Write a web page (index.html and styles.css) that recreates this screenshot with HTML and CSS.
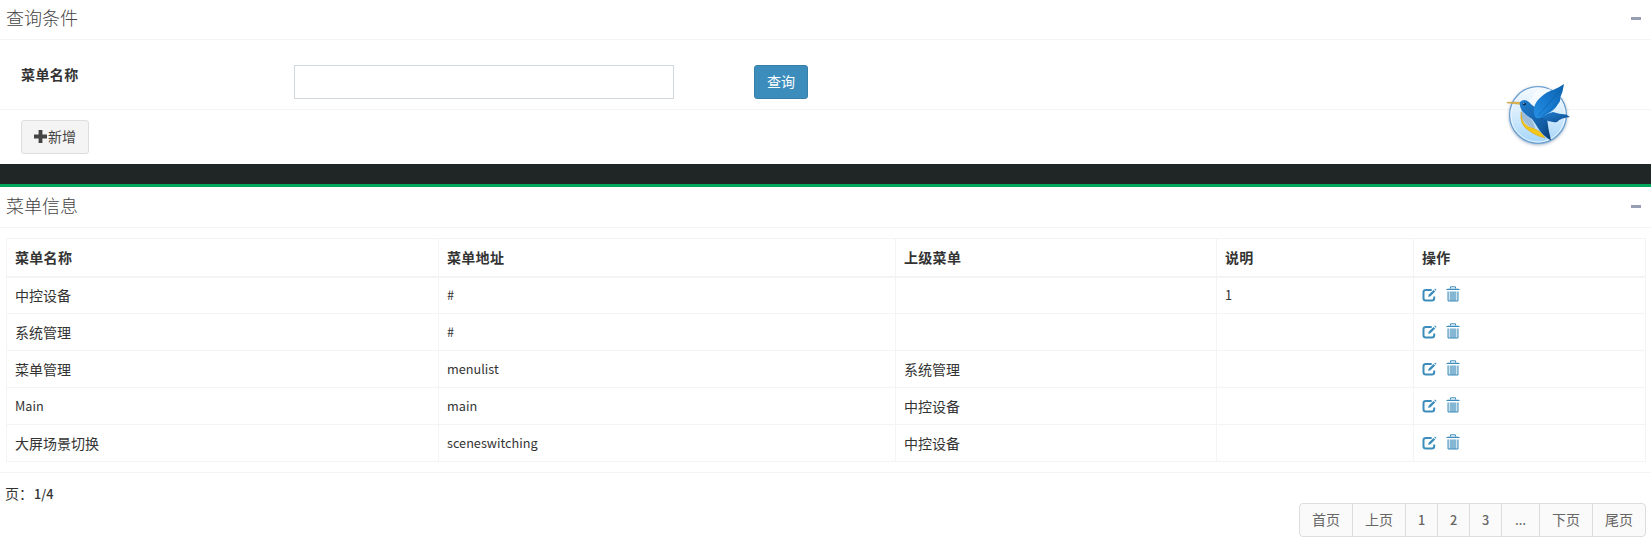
FILE: index.html
```html
<!DOCTYPE html>
<html lang="zh-CN">
<head>
<meta charset="utf-8">
<title>菜单管理</title>
<link rel="stylesheet" href="styles.css">
</head>
<body>
<svg class="defs" width="0" height="0">
  <symbol id="edit" viewBox="0 0 14 14">
    <path d="M9.2 1.9H3.4Q1 1.9 1 4.2V10.2Q1 12.5 3.4 12.5H9.4Q11.7 12.5 11.7 10.2V8.6" fill="none" stroke="currentColor" stroke-width="2"/>
    <path d="M5.6 9 6.3 6.6 11 1.9 12.7 3.600 8 8.300ZM11.700 1.200 12.500.4 14.100 2 13.300 2.800Z" fill="currentColor"/>
  </symbol>
  <symbol id="trash" viewBox="0 0 14 16">
    <path d="M4.500 2.500V.8H9.500V2.500M.5 3.500H13.500M2 5.500V15H12V5.500M5 5.500V15M7 5.500V15M9 5.500V15" fill="none" stroke="currentColor" stroke-width="1"/>
    <path d="M1.500 2.500H12.500V4H1.500Z" fill="currentColor" opacity=".65"/>
    <path d="M2 5.500H12V15H2Z" fill="currentColor" opacity=".25"/>
  </symbol>
</svg>
<section class="box">
  <header class="box-header"><h3 class="box-title">查询条件</h3><span class="collapse"></span></header>
  <div class="search">
    <label class="search-label" for="name">菜单名称</label>
    <input class="field" id="name" type="text">
    <button class="btn btn-primary">查询</button>
  </div>
  <div class="actions">
    <button class="btn btn-default"><svg class="plus" viewBox="0 0 13 13"><path d="M4.600 0H8.400V4.600H13V8.400H8.400V13H4.600V8.400H0V4.600H4.600Z"/></svg>新增</button>
  </div>
</section>
<section class="box box-success">
  <header class="box-header"><h3 class="box-title">菜单信息</h3><span class="collapse"></span></header>
  <div class="box-body">
    <table class="table">
      <colgroup><col class="c1"><col class="c2"><col class="c3"><col class="c4"><col class="c5"></colgroup>
      <thead><tr><th>菜单名称</th><th>菜单地址</th><th>上级菜单</th><th>说明</th><th>操作</th></tr></thead>
      <tbody>
        <tr><td>中控设备</td><td class="latin">#</td><td></td><td class="latin">1</td><td><div class="ops"><svg class="edit"><use href="#edit"/></svg><svg class="trash"><use href="#trash"/></svg></div></td></tr>
        <tr><td>系统管理</td><td class="latin">#</td><td></td><td></td><td><div class="ops"><svg class="edit"><use href="#edit"/></svg><svg class="trash"><use href="#trash"/></svg></div></td></tr>
        <tr><td>菜单管理</td><td class="latin">menulist</td><td>系统管理</td><td></td><td><div class="ops"><svg class="edit"><use href="#edit"/></svg><svg class="trash"><use href="#trash"/></svg></div></td></tr>
        <tr><td class="latin">Main</td><td class="latin">main</td><td>中控设备</td><td></td><td><div class="ops"><svg class="edit"><use href="#edit"/></svg><svg class="trash"><use href="#trash"/></svg></div></td></tr>
        <tr><td>大屏场景切换</td><td class="latin">sceneswitching</td><td>中控设备</td><td></td><td><div class="ops"><svg class="edit"><use href="#edit"/></svg><svg class="trash"><use href="#trash"/></svg></div></td></tr>
      </tbody>
    </table>
  </div>
  <footer class="box-footer">
    <div class="page-info">页：<span class="latin">1/4</span></div>
    <nav class="pager"><a class="w53">首页</a><a class="w53">上页</a><a class="latin">1</a><a class="latin">2</a><a class="latin">3</a><a class="w38 dots">…</a><a class="w53">下页</a><a class="w52">尾页</a></nav>
  </footer>
</section>
<svg class="bird" viewBox="0 0 100 90">
  <defs>
    <linearGradient id="disc" x1="0" y1="0" x2="0" y2="1"><stop offset="0" stop-color="#f4faff"/><stop offset=".5" stop-color="#d5ebfc"/><stop offset="1" stop-color="#a3d5fa"/></linearGradient>
    <linearGradient id="wing" x1="1" y1="0" x2="0" y2="1"><stop offset="0" stop-color="#0c62ac"/><stop offset=".5" stop-color="#1678cd"/><stop offset="1" stop-color="#2590e4"/></linearGradient>
    <linearGradient id="tail" x1="0" y1="0" x2="1" y2="1"><stop offset="0" stop-color="#217fd0"/><stop offset=".7" stop-color="#125ba2"/><stop offset="1" stop-color="#073568"/></linearGradient>
    <filter id="shade" x="-20%" y="-20%" width="140%" height="140%"><feDropShadow dx="0" dy="1" stdDeviation="1.500" flood-color="#456b96" flood-opacity=".5"/></filter>
  </defs>
  <circle cx="48" cy="45" r="28.400" fill="url(#disc)" stroke="#6c9fce" stroke-width="1.300" filter="url(#shade)"/>
  <circle cx="48" cy="45" r="27" fill="none" stroke="#f2f9ff" stroke-width=".8"/>
  <path d="M36 33Q45 24 63 17Q51 27 43 40ZM44 23Q48 20 54 18Q46 25 40 34Z" fill="#fff" opacity=".5"/>
  <path d="M31 41Q34 43 38 46Q44 50 45 59Q36 56 32 48Z" fill="#9ebddb"/>
  <path d="M31.200 42Q31 53 39 57Q51 60 55 68Q44 65 38 60Q29 54 31.200 42Z" fill="#f5c817" stroke="#c78b10" stroke-width=".4"/>
  <path d="M17 32.300Q25 31.700 31 32.300L31 34.500Q24 33.500 17 33Z" fill="#e6b94c" stroke="#b88e35" stroke-width=".4"/>
  <path d="M30 32Q34 28 39 32Q43 37 48 38L57 48Q58 59 61 70.500Q52 65 48 58Q45 53 42 49Q36 45 32 41Q29 36 30 32Z" fill="url(#tail)"/>
  <path d="M52 47Q57 43 63 42Q69 44 76 44.500L80 47Q70 48 67 52Q60 53 54 49Z" fill="url(#tail)"/>
  <path d="M44 38Q45 32 51 27Q56 22 63 20Q70 17 74 14Q73 22 70 28Q71 31 68 34Q65 40 57 44Q51 49 46 48Q43 44 44 38Z" fill="url(#wing)"/>
  <path d="M48 46Q57 35 71 20M52 46Q61 40 67 33" fill="none" stroke="#075497" stroke-width=".6" opacity=".7"/>
  <ellipse cx="34.300" cy="34" rx="1.700" ry="1.300" fill="#062a54"/><circle cx="33.800" cy="33.600" r=".5" fill="#fff"/>
</svg>
</body>
</html>
```
FILE: styles.css
```css
* { box-sizing: border-box; }
body {
  margin: 0;
  height: 544px;
  overflow: hidden;
  background: #fff;
  color: #333;
  font: 14px/20px "Noto Sans CJK SC", sans-serif;
}
.defs { position: absolute; }
.box { display: flex; flex-direction: column; }
.box-success { border-top: 3px solid #00a65a; }
.box-header {
  display: flex;
  justify-content: space-between;
  height: 40px;
  padding: 7px 10px 0 6px;
  border-bottom: 1px solid #f4f4f4;
}
.box-success .box-header { height: 41px; padding-top: 8px; }
.box-title { margin: 0; color: #444; font-size: 18px; line-height: 20px; font-weight: 300; }
.collapse { width: 10px; height: 3px; margin-top: 10px; background: #97a0b3; }
.search {
  display: flex;
  height: 70px;
  padding: 25px 21px 0;
  border-bottom: 1px solid #f4f4f4;
}
.search-label { width: 273px; margin-top: -1px; font-weight: 700; letter-spacing: .4px; color: #333; }
.field { width: 380px; height: 34px; margin-right: 80px; border: 1px solid #d2d6de; background: #fff; }
.btn {
  display: flex;
  align-items: center;
  justify-content: center;
  height: 34px;
  padding: 0 0 2px;
  border: 1px solid;
  border-radius: 3px;
  font: inherit;
}
.btn-primary { width: 54px; color: #fff; background: #3c8dbc; border-color: #367fa9; }
.btn-default { width: 68px; color: #444; background: #f4f4f4; border-color: #ddd; }
.plus { width: 13px; height: 13px; margin-right: 1px; fill: #444; }
.actions {
  height: 74px;
  padding: 10px 21px 0;
  border-bottom: 20px solid #202526;
}
.box-body { padding: 10px 5px 10px 6px; }
.table { width: 1640px; table-layout: fixed; border-collapse: collapse; }
.table th, .table td { height: 37px; padding: 0 8px; border: 1px solid #f4f4f4; text-align: left; line-height: 20px; }
.table th { height: 38px; border-bottom-width: 2px; letter-spacing: .3px; }
.table .latin, .latin { font-size: 12.7px; }
.c1 { width: 432px; }
.c2 { width: 457px; }
.c3 { width: 321px; }
.c4 { width: 197px; }
.c5 { width: 232px; }
.ops { display: flex; align-items: center; gap: 9px; color: #3c8dbc; }
.edit { width: 15px; height: 14px; }
.trash { width: 14px; height: 16px; margin-top: -2px; }
.box-footer {
  display: flex;
  justify-content: space-between;
  padding: 10px 5px 0;
  border-top: 1px solid #f4f4f4;
}
.page-info .latin { margin-left: 1px; font-weight: 500; }
.pager { display: flex; height: 34px; margin-top: 20px; border: 1px solid #ddd; border-radius: 4px; background: #fafafa; color: #666; }
.pager a { width: 32px; text-align: center; line-height: 31px; border-right: 1px solid #ddd; }
.pager .latin { font-weight: 500; line-height: 32px; }
.pager a:last-child { border-right: 0; }
.pager .w53 { width: 53px; }
.pager .w38 { width: 38px; }
.pager .w52 { width: 52px; }
.pager .dots { font-family: "Noto Sans", sans-serif; }
.bird { position: absolute; left: 1490px; top: 70px; width: 100px; height: 90px; }
```
